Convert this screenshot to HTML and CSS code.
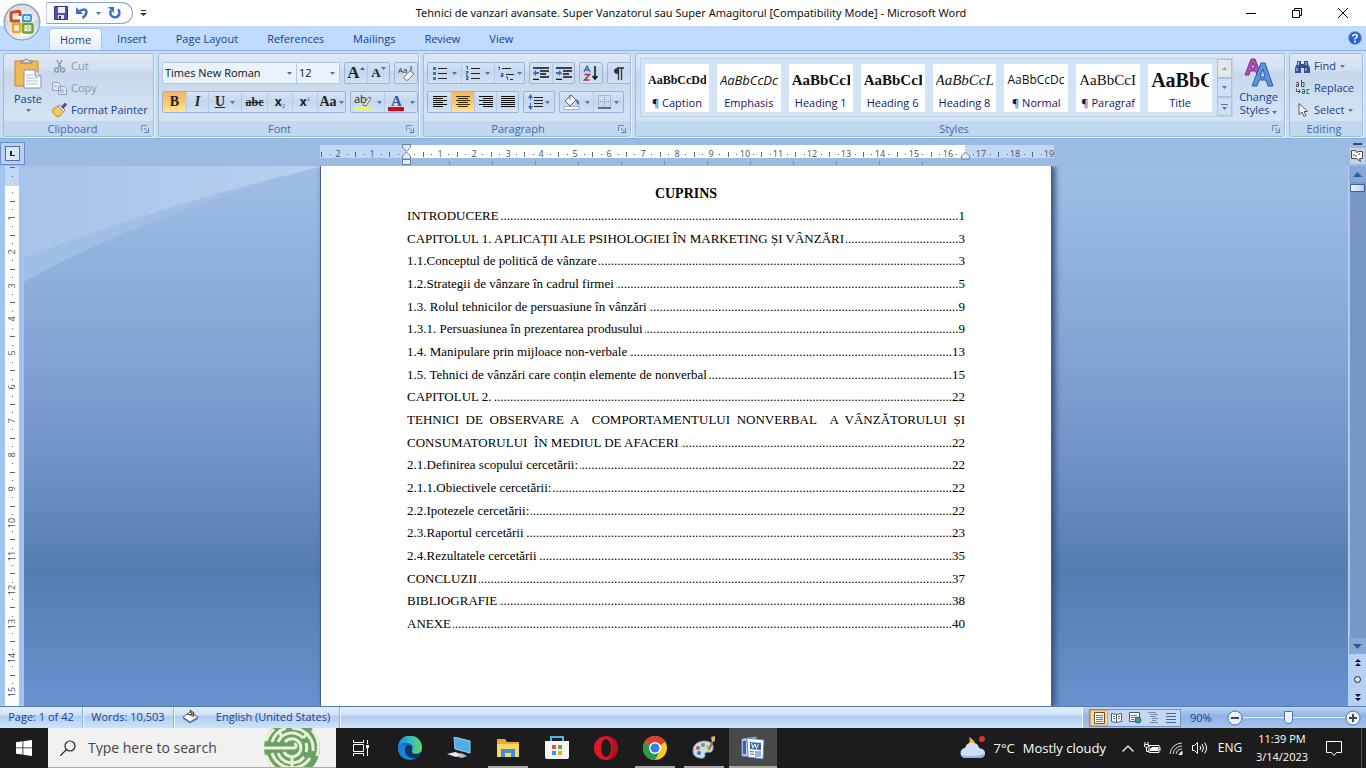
FILE: index.html
```html
<!DOCTYPE html>
<html lang="en">
<head>
<meta charset="utf-8">
<title>Tehnici de vanzari avansate - Microsoft Word</title>
<link rel="stylesheet" href="styles.css">
</head>
<body>
<svg class="defs" aria-hidden="true">
  <symbol id="arrow" viewBox="0 0 5 3"><path d="M0 0h5L2.500 3z" fill="#5673a3"/></symbol>
  <symbol id="launcher" viewBox="0 0 8 8"><path d="M.5 6V.5H6" fill="none" stroke="#6f8fba"/><path d="M3 3l3 3M7.500 3.500v4h-4" fill="none" stroke="#5878a8"/></symbol>
</svg>

<header class="titlebar">
  <button class="orb" aria-label="Office Button">
    <svg viewBox="0 0 38 38" width="38" height="38">
      <defs><radialGradient id="orbg" cx=".5" cy=".75" r=".75"><stop offset="0" stop-color="#fff"/><stop offset=".6" stop-color="#d5dbe5"/><stop offset="1" stop-color="#9aa6ba"/></radialGradient></defs>
      <circle cx="19" cy="19" r="18" fill="url(#orbg)" stroke="#8090ac"/>
      <path d="M3 17a16 15 0 0 1 32 0q-16 5-32 0z" fill="#fff" opacity=".55"/>
      <g fill="none">
        <path d="M17 18H9.500q-1.500 0-1.500-1.500V11q0-1.500 1.500-1.700l6-1q1.500 0 1.500 1.500V13" stroke="#d4491c" stroke-width="3"/>
        <path d="M20 18v-5q0-1 1-1h6q1 0 1 1v4q0 1-1 1z" stroke="#3c8fd0" stroke-width="2"/>
        <path d="M24 12v6M20 15h8" stroke="#8cc4ee"/>
        <path d="M17 21h-6q-1 0-1 1v6q0 1 1 1h5q1 0 1-1z" stroke="#f2a51e" stroke-width="2.500"/>
        <path d="M20 21h8q1.500 0 1.500 1.500V28q0 1.500-1.500 1.500h-6.500q-1.500 0-1.500-1.500z" stroke="#66a82e" stroke-width="2.500"/>
        <path d="M25 21v8M20 25h9" stroke="#a5cf64"/>
      </g>
    </svg>
  </button>
  <nav class="quick" aria-label="Quick Access Toolbar">
    <button aria-label="Save"><svg width="14" height="14" viewBox="0 0 14 14"><path d="M.5.5h13v13H.5z" fill="#5552a8" stroke="#37347f"/><path d="M4 1h7v6H4z" fill="#edf1fc"/><path d="M4 9h6v4H4z" fill="#dfe2f4"/><path d="M5 10h2v3H5z" fill="#37347f"/></svg></button>
    <button aria-label="Undo"><svg width="14" height="14" viewBox="0 0 14 14"><path d="M3 6q8-5 8.500 0 0 3-4 6" fill="none" stroke="#426fbd" stroke-width="2.500"/><path d="M1 1v7h7z" fill="#426fbd"/></svg></button>
    <button class="narrow" aria-label="Undo list"><svg width="5" height="3"><use href="#arrow"/></svg></button>
    <button aria-label="Redo"><svg width="14" height="14" viewBox="0 0 14 14"><path d="M4 4.500a4.500 4.500 0 1 0 7-1" fill="none" stroke="#3a6fc4" stroke-width="2.500"/><path d="M1 1h6v6z" fill="#3a6fc4"/></svg></button>
  </nav>
  <button class="customize" aria-label="Customize Quick Access Toolbar"><svg width="7" height="7" viewBox="0 0 7 7"><path d="M1 .5h5" stroke="#333"/><path d="M0 3h7L3.500 6z" fill="#333"/></svg></button>
  <h1 class="caption">Tehnici de vanzari avansate. Super Vanzatorul sau Super Amagitorul [Compatibility Mode] - Microsoft Word</h1>
  <div class="winbtns">
    <button aria-label="Minimize"><svg width="10" height="10"><path d="M0 5.500h10" stroke="#000"/></svg></button>
    <button aria-label="Restore"><svg width="10" height="10" fill="none" stroke="#000"><path d="M.5 2.500h7v7h-7zM2.500 2.500v-2h7v7h-2"/></svg></button>
    <button aria-label="Close"><svg width="10" height="10" stroke="#000"><path d="M0 0l10 10M10 0L0 10"/></svg></button>
  </div>
</header>

<nav class="tabs" aria-label="Ribbon tabs">
  <button class="tab active">Home</button><button class="tab">Insert</button><button class="tab">Page Layout</button><button class="tab">References</button><button class="tab">Mailings</button><button class="tab">Review</button><button class="tab">View</button>
  <button class="help" aria-label="Help"><svg width="14" height="14" viewBox="0 0 14 14"><circle cx="7" cy="7" r="6.500" fill="#2b62c9" stroke="#7fa4dd"/><path d="M4.800 5.500q0-2 2.200-2t2.200 1.800q0 1-1.200 1.600T7 8.500" fill="none" stroke="#fff" stroke-width="1.600"/><circle cx="7" cy="10.500" r="1" fill="#fff"/></svg></button>
</nav>

<section class="ribbon">
  <section class="group g-clip">
    <div class="body">
      <button class="big"><svg width="28" height="31" viewBox="0 0 28 31"><path d="M1 3h23v25H1z" fill="#efb955" stroke="#c68a2c"/><path d="M7 5V3h3q2-4 5 0h3v2z" fill="#e6e6e6" stroke="#777"/><path d="M10 12h11l6 6v12H10z" fill="#fff" stroke="#7c95bd"/><path d="M21 12v6h6" fill="#d3dff2" stroke="#7c95bd"/><path d="M12 17h7M12 20h12M12 23h12M12 26h12" stroke="#a9bbd8"/></svg><span>Paste</span><svg width="5" height="3"><use href="#arrow"/></svg></button>
      <div class="stack">
        <button class="cmd" disabled><svg width="15" height="14" viewBox="0 0 15 14" fill="none" stroke="#8f99a8" stroke-width="1.500"><path d="M5 1l4 8M10 1L6 9"/><circle cx="4.500" cy="11" r="2"/><circle cx="10.500" cy="11" r="2"/></svg>Cut</button>
        <button class="cmd" disabled><svg width="15" height="14" viewBox="0 0 15 14" fill="#dfe6f0" stroke="#98a4b6"><path d="M.5 1.500h6l2 2v6h-8zM6.500 5.500h6l2 2v6h-8z"/><path d="M8 9h4M8 11h4M2 5h3"/></svg>Copy</button>
        <button class="cmd"><svg width="15" height="14" viewBox="0 0 15 14"><path d="M0 7l6-4 6 5-5 6q-5-1-7-7z" fill="#f0cb59" stroke="#b48b26"/><path d="M6 3l2-1 5 5-1.500 1.500z" fill="#fff" stroke="#888"/><path d="M10 5l4-4.500" stroke="#4a4f87" stroke-width="3"/></svg>Format Painter</button>
      </div>
    </div>
    <footer><h2>Clipboard</h2><button aria-label="Clipboard options"><svg width="8" height="8"><use href="#launcher"/></svg></button></footer>
  </section>

  <section class="group g-font">
    <div class="body rows">
      <div class="row">
        <div class="combos"><select class="face" aria-label="Font"><option>Times New Roman</option></select><select class="size" aria-label="Font size"><option>12</option></select></div>
        <div class="set"><button class="serif f16" aria-label="Grow Font">A<svg width="5" height="3" viewBox="0 0 5 3"><path d="M0 3h5L2.500 0z" fill="#3a66b5"/></svg></button><button class="serif f13" aria-label="Shrink Font">A<svg width="5" height="3"><use href="#arrow"/></svg></button></div>
        <div class="set"><button aria-label="Clear Formatting"><svg width="17" height="17" viewBox="0 0 17 17"><text x="0" y="8" class="tiny">Aa</text><path d="M13 1v5" stroke="#444"/><path d="M6 12l6-6 4 3-6 6q-4 1-4-3z" fill="#fff" stroke="#777"/></svg></button></div>
      </div>
      <div class="row">
        <div class="set"><button class="on w23 serif f14"><b>B</b></button><button class="serif f14"><i>I</i></button><button class="wide serif f14"><u>U</u><svg width="5" height="3"><use href="#arrow"/></svg></button><button class="serif f12 w26"><s>abc</s></button><button class="f12 w25" aria-label="Subscript"><b>x</b><sub>2</sub></button><button class="f12 w25" aria-label="Superscript"><b>x</b><sup>2</sup></button><button class="serif f14 w28" aria-label="Change Case">Aa<svg width="5" height="3"><use href="#arrow"/></svg></button></div>
        <div class="set"><button class="wide" aria-label="Highlight"><svg width="18" height="17" viewBox="0 0 18 17"><path d="M1 13h16v3H1z" fill="#ff0"/><text x="0" y="9" class="ab">ab</text><path d="M9 11l6-8 2 1-5 8z" fill="#f7efd0" stroke="#666"/></svg><svg width="5" height="3"><use href="#arrow"/></svg></button><button class="wide" aria-label="Font Color"><svg width="17" height="17" viewBox="0 0 17 17"><text x="3" y="12" class="fc">A</text><path d="M0 13h16v4H0z" fill="#e3000f"/></svg><svg width="5" height="3"><use href="#arrow"/></svg></button></div>
      </div>
    </div>
    <footer><h2>Font</h2><button aria-label="Font options"><svg width="8" height="8"><use href="#launcher"/></svg></button></footer>
  </section>

  <section class="group g-para">
    <div class="body rows">
      <div class="row">
        <div class="set"><button class="wide" aria-label="Bullets"><svg width="14" height="14" viewBox="0 0 14 14"><path d="M0 1h3v3H0zM0 6h3v3H0zM0 11h3v3H0z" fill="#4a72b5"/><path d="M5 2.500h9M5 7.500h9M5 12.500h9" stroke="#222"/></svg><svg width="5" height="3"><use href="#arrow"/></svg></button><button class="wide" aria-label="Numbering"><svg width="14" height="14" viewBox="0 0 14 14"><path d="M0 .5h1.500v3M0 5.500h2v1.500H0V9h2M0 10.500h2v3H0M0 12h2" fill="none" stroke="#35599b"/><path d="M5 2.500h9M5 7.500h9M5 12.500h9" stroke="#222"/></svg><svg width="5" height="3"><use href="#arrow"/></svg></button><button class="w30" aria-label="Multilevel List"><svg width="17" height="15" viewBox="0 0 17 15"><path d="M0 1h1.500v3M3 7.500h2v3H3V9h2M8 11h1.500v3" fill="none" stroke="#35599b"/><path d="M4 2.500h9M8 8.500h8M12 13.500h3" stroke="#222"/></svg><svg width="5" height="3"><use href="#arrow"/></svg></button></div>
        <div class="set"><button aria-label="Decrease Indent"><svg width="16" height="13" viewBox="0 0 16 13"><path d="M0 1h16M7 4h9M7 7h6M7 10h9M0 12.500h6" stroke="#111" stroke-width="1.500"/><path d="M0 6l3-3v2h3v2H3v2z" fill="#4166c4"/></svg></button><button aria-label="Increase Indent"><svg width="16" height="13" viewBox="0 0 16 13"><path d="M0 1h16M7 4h9M7 7h6M7 10h9M0 12.500h6" stroke="#111" stroke-width="1.500"/><path d="M6 6L3 3v2H0v2h3v2z" fill="#4166c4"/></svg></button></div>
        <div class="set"><button aria-label="Sort"><svg width="16" height="16" viewBox="0 0 16 16"><path d="M1 7l3-6 3 6M2 5h4" fill="none" stroke="#3a66b5" stroke-width="1.300"/><path d="M1.500 9.500h5l-5 5.500h5" fill="none" stroke="#b0303c" stroke-width="1.500"/><path d="M12 1v13M9.500 11l2.500 3 2.500-3" fill="none" stroke="#111" stroke-width="1.500"/></svg></button></div>
        <div class="set"><button aria-label="Show marks"><svg width="12" height="13" viewBox="0 0 12 13"><path d="M5 7Q1 7 1 4t4-3z" fill="#333"/><path d="M4 1h7M5.500 1v12M8.500 1v12" stroke="#333" stroke-width="1.300"/></svg></button></div>
      </div>
      <div class="row">
        <div class="set"><button class="w23" aria-label="Align Left"><svg width="14" height="12" stroke="#111"><path d="M0 .5h14M0 2.500h10M0 4.500h14M0 6.500h10M0 8.500h14M0 10.500h10"/></svg></button><button class="on w23" aria-label="Center"><svg width="14" height="12" stroke="#3a2800"><path d="M0 .5h14M2 2.500h10M0 4.500h14M2 6.500h10M0 8.500h14M2 10.500h10"/></svg></button><button aria-label="Align Right"><svg width="14" height="12" stroke="#111"><path d="M0 .5h14M4 2.500h10M0 4.500h14M4 6.500h10M0 8.500h14M4 10.500h10"/></svg></button><button aria-label="Justify"><svg width="14" height="12" stroke="#111"><path d="M0 .5h14M0 2.500h14M0 4.500h14M0 6.500h14M0 8.500h14M0 10.500h14"/></svg></button></div>
        <div class="set"><button class="w30" aria-label="Line Spacing"><svg width="15" height="16" viewBox="0 0 15 16"><path d="M2.500 2v4M2.500 9v5" stroke="#3a66b5"/><path d="M0 4l2.500-4L5 4zM0 12l2.500 4L5 12z" fill="#3a66b5"/><path d="M6 3.500h9M6 6.500h9M6 9.500h9M6 12.500h9" stroke="#222"/></svg><svg width="5" height="3"><use href="#arrow"/></svg></button></div>
        <div class="set"><button class="wide" aria-label="Shading"><svg width="17" height="16" viewBox="0 0 17 16"><path d="M2 7l6-6 5 5-6 6z" fill="#f6f8fc" stroke="#566782"/><path d="M7 1v5" stroke="#566782"/><path d="M12 5q5 1 4 6-2-1-3-4z" fill="#496ca8"/><path d="M1 12.500h15v3H1z" fill="#fff" stroke="#a0aec4"/></svg><svg width="5" height="3"><use href="#arrow"/></svg></button><button class="w30" aria-label="Borders"><svg width="14" height="14" viewBox="0 0 14 14"><path d="M.5.5h12v12H.5zM6.500 0v13M0 6.500h13" fill="none" stroke="#8194b3" stroke-dasharray="1 1"/><path d="M0 13h13" stroke="#111"/></svg><svg width="5" height="3"><use href="#arrow"/></svg></button></div>
      </div>
    </div>
    <footer><h2>Paragraph</h2><button aria-label="Paragraph options"><svg width="8" height="8"><use href="#launcher"/></svg></button></footer>
  </section>

  <section class="group g-styles">
    <div class="body">
      <div class="gallery">
        <button class="style"><span class="sample s1">AaBbCcDd</span><span>¶ Caption</span></button>
        <button class="style"><span class="sample s2">AaBbCcDc</span><span>Emphasis</span></button>
        <button class="style"><span class="sample s3">AaBbCcI</span><span>Heading 1</span></button>
        <button class="style"><span class="sample s3">AaBbCcI</span><span>Heading 6</span></button>
        <button class="style"><span class="sample s4">AaBbCcL</span><span>Heading 8</span></button>
        <button class="style"><span class="sample s5">AaBbCcDc</span><span>¶ Normal</span></button>
        <button class="style"><span class="sample s6">AaBbCcI</span><span>¶ Paragraf</span></button>
        <button class="style"><span class="sample s7">AaBbC</span><span>Title</span></button>
        <div class="scrollers">
          <button class="off" aria-label="Previous styles"><svg width="5" height="3" viewBox="0 0 5 3"><path d="M0 3h5L2.500 0z" fill="#9a9fa8"/></svg></button>
          <button aria-label="Next styles"><svg width="5" height="3"><use href="#arrow"/></svg></button>
          <button aria-label="More styles"><svg width="7" height="6" viewBox="0 0 7 6"><path d="M0 .5h7" stroke="#5673a3"/><path d="M1 3h5L3.500 6z" fill="#5673a3"/></svg></button>
        </div>
      </div>
      <button class="big change"><svg width="30" height="29" viewBox="0 0 30 29"><path d="M1 17L7 1h4l6 16h-4l-1-4H6l-1 4zM7 10h4L9 5z" fill="#b04db4" stroke="#7d3490"/><path d="M8 28L17 5h4l8 23h-5l-2-6h-7l-2 6zM16 19h5l-2-8z" fill="#5c93dc" stroke="#2d5ea8"/></svg><span>Change<br>Styles <svg width="5" height="3"><use href="#arrow"/></svg></span></button>
    </div>
    <footer><h2>Styles</h2><button aria-label="Styles options"><svg width="8" height="8"><use href="#launcher"/></svg></button></footer>
  </section>

  <section class="group g-edit">
    <div class="body">
      <div class="stack">
        <button class="cmd"><svg width="15" height="13" viewBox="0 0 15 13"><path d="M2 1h4v3h3V1h4v3l2 4v5H9V8H6v5H0V8l2-4z" fill="#33518d"/><path d="M2 8v3M11 8v3M3.500 2v3M11 2v3" stroke="#d6e2f5"/></svg>Find<svg width="5" height="3"><use href="#arrow"/></svg></button>
        <button class="cmd"><svg width="15" height="16" viewBox="0 0 15 16"><g fill="none" stroke="#555"><path d="M1 2.500h2.500v4H1.500v-2h2M6.500 0v6.500h2.500v-4H6.500"/><path d="M7 9.500h2.500v4H7.500v-2h2M14.500 9.500H12v4h2.500" stroke="#257a3a"/><path d="M1.500 8.500v3H5M3.500 9.500l2 2-2 2"/></g></svg>Replace</button>
        <button class="cmd"><svg width="15" height="14" viewBox="0 0 15 14"><path d="M4 .5v11l3-2.500 2 4.500 2-1-2-4h3.500z" fill="#fff" stroke="#556"/></svg>Select<svg width="5" height="3"><use href="#arrow"/></svg></button>
      </div>
    </div>
    <footer><h2>Editing</h2></footer>
  </section>
</section>

<main class="workspace">
  <div class="corner"><button aria-label="Left Tab"><svg width="6" height="6"><path d="M1 0v5h5" fill="none" stroke="#223" stroke-width="2"/></svg></button></div>
  <div class="hwrap"><svg class="hruler" id="hruler" role="img" aria-label="Horizontal ruler"></svg></div>
  <div class="rtop"><button aria-label="View Ruler"><svg width="12" height="12" viewBox="0 0 12 12" fill="#fff" stroke="#445"><path d="M.5.5h4l1 2 2-1h4v7h-3l1 3-4-3h-5z"/><path d="M3 4v2M5 5v2M8 3v2" /></svg></button></div>
  <div class="vwrap"><svg class="vruler" id="vruler" role="img" aria-label="Vertical ruler"></svg></div>
  <div class="canvas">
    <svg class="swoosh" width="296" height="118" viewBox="0 0 296 118"><defs><linearGradient id="sw" x1="0" x2="1"><stop offset="0" stop-color="#a5c4e8"/><stop offset="1" stop-color="#b7d0f0"/></linearGradient></defs><path d="M0 116Q120 48 296 2L296 0H0z" fill="#a0bfe6"/><path d="M0 92Q140 38 296 1V0H0z" fill="url(#sw)"/></svg>
    <article class="page">
      <h2 class="toc-title">CUPRINS</h2>
      <div class="toc">
        <a href="#"><span>INTRODUCERE</span><i></i><b>1</b></a>
        <a href="#"><span>CAPITOLUL 1. APLICAȚII ALE PSIHOLOGIEI ÎN MARKETING ȘI VÂNZĂRI</span><i></i><b>3</b></a>
        <a href="#"><span>1.1.Conceptul de politică de vânzare</span><i></i><b>3</b></a>
        <a href="#"><span>1.2.Strategii de vânzare în cadrul firmei</span><i></i><b>5</b></a>
        <a href="#"><span>1.3. Rolul tehnicilor de persuasiune în vânzări</span><i></i><b>9</b></a>
        <a href="#"><span>1.3.1. Persuasiunea în prezentarea produsului</span><i></i><b>9</b></a>
        <a href="#"><span>1.4. Manipulare prin mijloace non-verbale</span><i></i><b>13</b></a>
        <a href="#"><span>1.5. Tehnici de vânzări care conțin elemente de nonverbal</span><i></i><b>15</b></a>
        <a href="#"><span>CAPITOLUL 2.</span><i></i><b>22</b></a>
        <a href="#" class="justify">TEHNICI DE OBSERVARE A &nbsp;COMPORTAMENTULUI NONVERBAL &nbsp;A VÂNZĂTORULUI ȘI</a>
        <a href="#"><span>CONSUMATORULUI &nbsp;ÎN MEDIUL DE AFACERI</span><i></i><b>22</b></a>
        <a href="#"><span>2.1.Definirea scopului cercetării:</span><i></i><b>22</b></a>
        <a href="#"><span>2.1.1.Obiectivele cercetării:</span><i></i><b>22</b></a>
        <a href="#"><span>2.2.Ipotezele cercetării:</span><i></i><b>22</b></a>
        <a href="#"><span>2.3.Raportul cercetării</span><i></i><b>23</b></a>
        <a href="#"><span>2.4.Rezultatele cercetării</span><i></i><b>35</b></a>
        <a href="#"><span>CONCLUZII</span><i></i><b>37</b></a>
        <a href="#"><span>BIBLIOGRAFIE</span><i></i><b>38</b></a>
        <a href="#"><span>ANEXE</span><i></i><b>40</b></a>
      </div>
    </article>
  </div>
  <div class="vscroll">
    <button aria-label="Scroll up"><svg width="9" height="5" viewBox="0 0 9 5"><path d="M0 5h9L4.500 0z" fill="#34558f"/></svg></button>
    <div class="track"><div class="thumb"></div></div>
    <button aria-label="Scroll down"><svg width="9" height="5" viewBox="0 0 9 5"><path d="M0 0h9L4.500 5z" fill="#34558f"/></svg></button>
    <div class="browse">
      <button aria-label="Previous Page"><svg width="6" height="7" viewBox="0 0 6 7"><path d="M0 3h6L3 0zM0 7h6L3 4z" fill="#112"/></svg></button>
      <button aria-label="Select Browse Object"><svg width="7" height="7"><circle cx="3.500" cy="3.500" r="3" fill="#dce4ee" stroke="#223"/></svg></button>
      <button aria-label="Next Page"><svg width="6" height="7" viewBox="0 0 6 7"><path d="M0 0h6L3 3zM0 4h6L3 7z" fill="#112"/></svg></button>
    </div>
  </div>
</main>

<footer class="status">
  <button class="st-page">Page: 1 of 42</button>
  <button class="st-words">Words: 10,503</button>
  <button class="st-proof" aria-label="Proofing"><svg width="17" height="15" viewBox="0 0 17 15"><path d="M1 8l7-5 8 5-8 5z" fill="#fff" stroke="#4b6390"/><path d="M1 8v2l7 4.500 8-4.500V8l-8 5z" fill="#5b7fbd"/><path d="M5 5l5 1-2-5 4 3-1 4" fill="#c79a6b" stroke="#5a3a25"/></svg></button>
  <button class="st-lang">English (United States)</button>
  <div class="st-right">
    <div class="views">
      <button class="on" aria-label="Print Layout"><svg width="11" height="12"><path d="M.5.500h10v11H.5z" fill="#fff" stroke="#6b5130"/><path d="M2 3.500h7M2 5.500h7M2 7.500h7M2 9.500h7" stroke="#777"/></svg></button>
      <button aria-label="Full Screen Reading"><svg width="12" height="11"><path d="M.5 1.500l5 1 5-1v8l-5 1-5-1zM5.500 2v8" fill="#fff" stroke="#48597a"/><path d="M2 4.500h2M2 6.500h2M7 4.500h2M7 6.500h2" stroke="#667"/></svg></button>
      <button aria-label="Web Layout"><svg width="13" height="12"><path d="M.5.500h10v9H.5z" fill="#fff" stroke="#48597a"/><path d="M2 3.500h6M2 5.500h5M2 7.500h3" stroke="#777"/><circle cx="9" cy="8" r="3" fill="#3d9a86" stroke="#2b5d8e"/></svg></button>
      <button aria-label="Outline"><svg width="10" height="11" stroke="#7d8ba5"><path d="M0 .5h8M2 2.500h8M2 4.500h6M4 6.500h6M4 8.500h4M2 10.500h8"/></svg></button>
      <button aria-label="Draft"><svg width="10" height="10" stroke="#56657f"><path d="M0 .5h10M0 3.500h10M0 6.500h10M0 9.500h10"/></svg></button>
    </div>
    <button class="pct">90%</button>
    <button class="zoom-btn" aria-label="Zoom Out"><svg width="16" height="16"><circle cx="8" cy="8" r="7" fill="#eaf1fb" stroke="#5a7296"/><path d="M4 8h8" stroke="#445" stroke-width="2"/></svg></button>
    <input class="zoom" type="range" min="0" max="100" value="44" aria-label="Zoom">
    <button class="zoom-btn" aria-label="Zoom In"><svg width="16" height="16"><circle cx="8" cy="8" r="7" fill="#eaf1fb" stroke="#5a7296"/><path d="M4 8h8M8 4v8" stroke="#445" stroke-width="2"/></svg></button>
  </div>
</footer>

<footer class="taskbar">
  <button class="start" aria-label="Start"><svg width="16" height="16" viewBox="0 0 16 16" fill="#fff"><path d="M0 2.200L6.500 1.300v6.200H0zM7.300 1.200L16 0v7.500H7.300zM0 8.300h6.500v6.300L0 13.700zM7.300 8.300H16V16l-8.700-1.200z"/></svg></button>
  <label class="search">
    <svg width="16" height="16" viewBox="0 0 16 16" fill="none" stroke="#222" stroke-width="1.200"><circle cx="10" cy="6" r="5"/><path d="M6.500 9.500L0 16"/></svg>
    <input type="text" placeholder="Type here to search" aria-label="Search">
    <svg class="maze" width="56" height="40" viewBox="0 0 56 40"><circle cx="28" cy="20" r="28" fill="#6b9f6a"/><g fill="none" stroke="#e9f3d3" stroke-width="3"><path d="M0 20h30a2 2 0 0 0 0-4"/><path d="M20 24a9 9 0 1 0 1-10"/><path d="M14 25a15 15 0 0 0 26 4M14 14a15 15 0 0 1 25-4M42 15a15 15 0 0 1 0 9"/><path d="M8 25a21 21 0 0 0 38 5M8 14a21 21 0 0 1 14-14M28 0a21 21 0 0 1 21 23"/><path d="M2 27a27 27 0 0 0 10 14M2 13a27 27 0 0 1 8-12M48 2a27 27 0 0 1 5 26M28 29v11M39 10l5-5M18 9l-3-6"/></g></svg>
  </label>
  <nav class="apps" aria-label="Taskbar">
    <button aria-label="Task View"><svg width="16" height="16" viewBox="0 0 16 16" fill="none" stroke="#fff"><path d="M.5 0v2.500h10V0M.5 16v-2.500h10V16M.5 4.500h10v7H.5zM14.500 0v4M14.500 8v8"/><path d="M13 5h3v3h-3z" fill="#fff" stroke="none"/></svg></button>
    <button aria-label="Edge"><svg width="24" height="24" viewBox="0 0 24 24"><defs><linearGradient id="eg" x2="1"><stop stop-color="#238fe0"/><stop offset=".5" stop-color="#35b9c5"/><stop offset="1" stop-color="#62d957"/></linearGradient></defs><circle cx="12" cy="12" r="12" fill="#0e6fcb"/><path d="M0 11A12 12 0 0 1 24 12q0 6-7 6-4 0-3-3 3-7-4-8Q3 6 0 11z" fill="url(#eg)"/><path d="M10 9q5 0 4 5-1 4 4 4 3 0 5-2 0 3-5 6Q6 22 7 14q0-4 3-5z" fill="#15335b"/><path d="M8 10q-4 9 7 13Q1 25 0 12q2-6 8-2z" fill="#1684df"/></svg></button>
    <button aria-label="This PC"><svg width="24" height="22" viewBox="0 0 24 22"><path d="M7 0l16 4v12L8 12z" fill="#51aceb" stroke="#a9cfe9"/><path d="M0 17l8-2 9 3-8 2z" fill="#e2e8ec"/><path d="M14 16l6 3-5 2-4-1z" fill="#b6c2cb"/></svg></button>
    <button class="run" aria-label="File Explorer"><svg width="22" height="20" viewBox="0 0 22 20"><path d="M0 1h8l2 3h12v15H0z" fill="#e9ad2f"/><path d="M0 6h22v13H0z" fill="#fbd768"/><path d="M4 19v-8h14v8h-4v-4H8v4z" fill="#3f91d1"/></svg></button>
    <button aria-label="Store"><svg width="24" height="24" viewBox="0 0 24 24"><path d="M6 5V1h12v4" fill="none" stroke="#4bb5ea" stroke-width="2"/><path d="M0 5h24v16q0 2-2 2H2q-2 0-2-2z" fill="#f4f5f7"/><path d="M7 9h4v4H7z" fill="#df5535"/><path d="M13 9h4v4h-4z" fill="#73a92a"/><path d="M7 15h4v4H7z" fill="#3a9bd4"/><path d="M13 15h4v4h-4z" fill="#e9aa21"/></svg></button>
    <button aria-label="Opera"><svg width="24" height="24" viewBox="0 0 24 24"><circle cx="12" cy="12" r="12" fill="#e3152b"/><path d="M12 0a12 12 0 0 1 0 24q6-2 6-12T12 0z" fill="#b80e20"/><ellipse cx="12" cy="12" rx="5" ry="9" fill="#1c1c1c"/></svg></button>
    <button class="run" aria-label="Chrome"><svg width="24" height="24" viewBox="0 0 24 24"><circle cx="12" cy="12" r="12" fill="#fbc928"/><path d="M12 12L1.600 6A12 12 0 0 1 22.400 6z" fill="#e23e30"/><path d="M12 12L1.600 6A12 12 0 0 0 12 24l5-9z" fill="#279b4b"/><circle cx="12" cy="12" r="6" fill="#fff"/><circle cx="12" cy="12" r="4.600" fill="#3b7fea"/></svg></button>
    <button class="run" aria-label="Paint"><svg width="24" height="24" viewBox="0 0 24 24"><path d="M1 15Q1 6 12 5q10 0 9 8-1 4-5 3-4 0-3 3 0 4-5 3-7-1-7-7z" fill="#c8dced" stroke="#8ea6b8"/><circle cx="6" cy="12" r="2" fill="#d8503e"/><circle cx="11" cy="9" r="2" fill="#69a845"/><circle cx="16" cy="11" r="2" fill="#e6b530"/><circle cx="7" cy="17" r="2" fill="#3b71c1"/><path d="M17 14l4-10" stroke="#a96c35" stroke-width="2"/><path d="M20 6l-1-5 4-1v5z" fill="#e2b470"/></svg></button>
    <button class="run current" aria-label="Word"><svg width="24" height="24" viewBox="0 0 24 24"><path d="M1 3l14-2v20L1 20z" fill="#c9d9f0" stroke="#7899d0"/><path d="M6 2l17 2-1 19-15-2z" fill="#fff" stroke="#5c83c4"/><path d="M2 5l3-.500v14L2 18z" fill="#3265b5"/><path d="M9 6l11 1v7l-11-1z" fill="#3265b5"/><path d="M10.500 7l1.500 5 2-4 1.500 4.500 2-4.500" fill="none" stroke="#fff"/><path d="M9 15.500l4 .500M9 18l4 .500M15 15v6M17 15v6M19 15v6" stroke="#3a62a8"/></svg></button>
  </nav>
  <div class="tray">
    <button class="weather"><svg width="26" height="24" viewBox="0 0 26 24"><path d="M9 1q3 6-5 12 5 4 11-1Q17 5 9 1z" fill="#f5b33d"/><path d="M6 22a5 5 0 0 1-1-10q2-6 8-5 5 0 6 5 6 1 6 5 0 5-6 5z" fill="#cddffa"/><path d="M2 19q11 3 23-1-1 4-6 4H6q-3 0-4-3z" fill="#8db3ee"/><circle cx="22" cy="3" r="3" fill="#d5382f"/></svg><span>7°C</span><span>Mostly cloudy</span></button>
    <button aria-label="Hidden icons"><svg width="12" height="7" viewBox="0 0 12 7" fill="none" stroke="#fff" stroke-width="1.200"><path d="M.5 6.500L6 1l5.500 5.500"/></svg></button>
    <button aria-label="Battery"><svg width="17" height="12" viewBox="0 0 17 12" fill="none" stroke="#fff"><path d="M5 3.500h10v7H5zM16 5v4"/><path d="M8 5h6v4H6V7z" fill="#fff" stroke="none"/><path d="M1 0v2M4 0v2M.5 2.500h4v2l-2 1-2-1zM2.500 5v4.500H5"/></svg></button>
    <button aria-label="Network"><svg width="14" height="14" viewBox="0 0 14 14" fill="none" stroke="#ddd"><path d="M1 13A12 12 0 0 1 13 2M4 13a9 9 0 0 1 9-8M7 13a6 6 0 0 1 6-5"/><path d="M10 13.500l3-3v3z" fill="#fff" stroke="#fff"/></svg></button>
    <button aria-label="Volume"><svg width="16" height="14" viewBox="0 0 16 14" fill="none" stroke="#fff"><path d="M.5 4.500h2l3-3v11l-3-3h-2zM8 5q1.500 2 0 4M10 3q3 4 0 8M12.500 1.500q4 5.500 0 11"/></svg></button>
    <button class="lang">ENG</button>
    <button class="clock"><time>11:39 PM</time><time>3/14/2023</time></button>
    <button class="notice" aria-label="Notifications"><svg width="16" height="17" viewBox="0 0 16 17" fill="none" stroke="#fff"><path d="M.5 1.500h15v11h-5l-2.500 3-2.500-3h-5z"/></svg></button>
  </div>
</footer>
<script src="rulers.js"></script>
</body>
</html>
```
FILE: styles.css
```css
* { box-sizing: border-box; }
body { margin: 0; height: 100vh; overflow: hidden; display: flex; flex-direction: column; font: 11px/16px "Open Sans", "Noto Sans", sans-serif; color: #15428b; background: #bfdbff; }
button { font: inherit; color: inherit; background: none; border: 0; padding: 0; margin: 0; display: flex; align-items: center; justify-content: center; white-space: nowrap; }
h1, h2 { margin: 0; font: inherit; }
svg { flex: none; }
.defs { position: absolute; width: 0; height: 0; }

/* Title bar */
.titlebar { position: relative; z-index: 2; flex: none; height: 26px; display: flex; align-items: center; background: #fff; padding-left: 46px; }
.orb { position: absolute; left: 3px; top: 3px; }
.quick { height: 22px; width: 87px; display: flex; align-items: center; gap: 3px; padding-left: 5px; border: 1px solid #8ea3c4; border-left-color: #c5d0e2; border-radius: 0 11px 11px 0; background: #fbfcff; }
.quick button { width: 18px; }
.quick .narrow { width: 8px; }
.customize { width: 20px; }
.caption { flex: 1; text-align: center; color: #111; font-family: "Noto Sans", sans-serif; white-space: nowrap; overflow: hidden; line-height: 20px; padding-left: 1px; }
.winbtns { display: flex; }
.winbtns button { width: 46px; height: 24px; }

/* Tabs */
.tabs { flex: none; height: 24px; display: flex; align-items: flex-end; gap: 1px; padding: 0 4px 0 49px; }
.tab { height: 22px; padding: 0 14px; }
.tab.active { background: linear-gradient(#fff, #e3edf9); border: 1px solid #a9c6ec; border-bottom: 0; border-radius: 4px 4px 0 0; padding: 0 10px; }
.help { margin-left: auto; height: 24px; }

/* Ribbon */
.ribbon { flex: none; height: 89px; display: flex; gap: 4px; padding: 2px 3px 1px; background: #c9dcf4; border-top: 1px solid #8db2e3; border-bottom: 1px solid #7fb3dd; }
.group { display: flex; flex-direction: column; border: 1px solid #9ebfdb; border-radius: 3px; background: linear-gradient(#dfe9f5 0, #d3e0f1 16px, #c7d8ed 18px, #d9e8f6 100%); box-shadow: 1px 1px 0 #e9f3fd; overflow: hidden; }
.g-clip { width: 151px; }
.g-font { width: 261px; }
.g-para { width: 208px; }
.g-styles { flex: 1; min-width: 0; }
.g-edit { width: 74px; }
.body { flex: 1; display: flex; min-height: 0; }
.rows { flex-direction: column; gap: 7px; padding: 8px 0 0 3px; }
.row { display: flex; gap: 4px; height: 22px; }
.group footer { flex: none; height: 15px; display: flex; align-items: center; background: #c2d8f0; color: #3e6aaa; padding-right: 4px; }
.group h2 { flex: 1; text-align: center; }
.g-font h2, .g-para h2 { padding-right: 6px; }
.big { flex-direction: column; justify-content: flex-start; width: 48px; padding-top: 4px; }
.big span { line-height: 13px; }
.big > span { padding-top: 3px; }
.g-clip .big > span { padding-bottom: 4px; }
.stack { display: flex; flex-direction: column; padding-top: 1px; }
.cmd { height: 22px; gap: 4px; justify-content: flex-start; }
.cmd:disabled { color: #8d96a5; }
.g-edit .stack { padding-left: 5px; }

.combos { display: flex; width: 179px; border: 1px solid #b3c7e1; }
select { appearance: none; border: 0; border-radius: 0; font: inherit; color: #111; padding: 0 2px; background: #eaf2fb url("data:image/svg+xml,%3Csvg xmlns='http://www.w3.org/2000/svg' width='5' height='3'%3E%3Cpath d='M0 0h5L2.5 3z' fill='%235673a3'/%3E%3C/svg%3E") no-repeat right 4px center; }
.face { flex: 1; }
.size { width: 43px; border-left: 1px solid #b3c7e1; }
.set { display: flex; border: 1px solid #9ab5d8; border-radius: 2px; background: linear-gradient(#d6e4f5, #c3d7ef 50%, #d2e3f6); }
.set button { width: 22px; gap: 2px; color: #222; }
.set button + button { border-left: 1px solid #b5cae5; }
.set .w23 { width: 23px; }
.set .w25 { width: 25px; gap: 0; }
.set .w26 { width: 26px; }
.set .w28 { width: 28px; }
.set .w30 { width: 30px; }
.set .wide { width: 33px; gap: 5px; }
.set .on { background: linear-gradient(#f5b567, #fbc66c 50%, #ffe597); }
.serif { font-family: "Liberation Serif", serif; font-weight: bold; }
.set .f16 { font-size: 17px; gap: 0; }
.f16 svg, .f13 svg { margin-bottom: 10px; }
.set .f13 { font-size: 13px; gap: 0; }
.f14 { font-size: 14px; }
.f12 { font-size: 12px; }
.set button sub, .set button sup { font-size: 6px; line-height: 8px; color: #3a66b5; }
.set button sub { align-self: flex-end; padding-bottom: 2px; }
.set button sup { align-self: flex-start; padding-top: 3px; }
.tiny { font: 8px "Open Sans", sans-serif; fill: #333; }
.ab { font: 11px "Open Sans", sans-serif; fill: #222; }
.fc { font: bold 15px "Liberation Serif", serif; fill: #35599b; }

.gallery { flex: 1; min-width: 0; display: flex; gap: 8px; margin: 4px 0 4px 4px; padding: 5px 0 4px 4px; background: #d3e4f7; border: 1px solid #bdd3ed; }
.style { flex: 1; min-width: 0; flex-direction: column; background: #fff; color: #15156b; overflow: hidden; justify-content: space-between; padding: 4px 3px 1px; }
.sample { width: 100%; height: 24px; line-height: 24px; overflow: hidden; text-align: left; color: #111; }
.s1, .s3, .s4, .s6, .s7 { font-family: "Liberation Serif", serif; }
.s1 { font-size: 12px; font-weight: bold; }
.s2 { font-style: italic; font-size: 13px; }
.s3 { font-size: 15px; font-weight: bold; }
.s4 { font-size: 15px; font-style: italic; }
.s5 { font-size: 12px; }
.s6 { font-size: 15px; }
.s7 { font-size: 20px; font-weight: bold; }
.scrollers { flex: none; width: 15px; display: flex; flex-direction: column; margin: -5px 0 -4px -3px; }
.scrollers button { flex: 1; border: 1px solid #a9c2e3; background: #cfe0f5; }
.scrollers .off { background: #e3e6ea; }
.change { flex: none; width: 51px; }

/* Editing area */
.workspace { flex: 1; min-height: 0; display: grid; grid-template: 27px 1fr / 24px 1fr 18px; background: #9cbbe3; }
.corner { padding: 3px 0 1px; }
.corner button { width: 25px; height: 23px; border: 1px solid #6a8fca; background: #b9d0f1; }
.corner svg { border: 1px solid #4a6fae; width: 15px; height: 15px; padding: 4px; background: #dce8fa; }
.hwrap { display: flex; justify-content: center; padding-top: 5px; overflow: hidden; }
.hruler { width: 734px; height: 22px; margin-left: 2px; }
.rtop { display: flex; flex-direction: column; align-items: center; padding-top: 4px; }
.rtop::before { content: ""; width: 9px; height: 2px; background: #2d4b80; margin-bottom: 3px; }
.rtop button { width: 15px; height: 16px; background: #cbd3de; }
.vwrap { padding-left: 5px; overflow: hidden; background: #a3c4ef; }
.vruler { display: block; width: 14px; height: 100%; }
svg text.num { font: 9px "Open Sans", sans-serif; fill: #44505f; text-anchor: middle; }
.canvas { position: relative; overflow: hidden; display: flex; justify-content: center; background: linear-gradient(#9fbee7 0, #8dabd8 25%, #6f93c8 55%, #567db2 75%, #5c85bd 85%, #6893cf 100%); }
.swoosh { position: absolute; left: 0; top: 0; }
.page { position: relative; width: 732px; padding: 17px 86px 0; background: #fff; border: 1px solid #4a5f80; border-width: 0 1px; box-shadow: 3px 0 6px #34507b; color: #000; font: 13px/22px "Liberation Serif", serif; }
.toc-title { text-align: center; font-size: 14px; font-weight: bold; }
.toc { min-height: 430px; display: grid; align-content: space-between; }
.toc a { display: flex; gap: 2px; color: inherit; text-decoration: none; white-space: nowrap; min-width: 0; }
.toc i { flex: 1; width: 0; overflow: hidden; direction: rtl; font-style: normal; }
.toc i::before { content: "................................................................................................................................................................................................"; }
.toc b { font-weight: normal; margin-left: -2px; }
.toc .justify { display: block; text-align: justify; text-align-last: justify; white-space: normal; }

.vscroll { display: flex; flex-direction: column; padding-left: 1px; background: #b6d0f3; }
.vscroll > button { height: 16px; background: #87a7d6; }
.track { flex: 1; background: #7897c5; border-left: 1px solid #a9c4ea; padding-top: 2px; }
.thumb { width: 15px; height: 8px; border: 1px solid #46618f; border-radius: 1px; background: linear-gradient(90deg, #f1f6fd, #b3cbee); }
.browse { height: 52px; display: flex; flex-direction: column; justify-content: space-around; align-items: center; }

/* Status bar */
.status { flex: none; height: 22px; display: flex; border-top: 1px solid #567db1; background: linear-gradient(#e2eefc 0, #cfe1f8 8px, #b2cdef 9px, #cfe2fa 100%); }
.status > button { border-right: 1px solid #8fb2e0; box-shadow: 1px 0 0 #eef5fe; padding-bottom: 2px; }
.st-page { width: 83px; }
.st-words { width: 91px; }
.st-proof { width: 33px; }
.status .st-proof { border: 0; box-shadow: none; }
.st-lang { width: 133px; }
.st-right { margin-left: auto; display: flex; align-items: center; padding: 0 5px 0 6px; border-left: 1px solid #eef5fe; background: linear-gradient(#bdd5f5, #8fb3e5 45%, #a7c6ef); }
.views { display: flex; height: 18px; border: 1px solid #6f93c9; background: #c3d8f4; }
.views button { width: 18px; }
.views .on { background: #fbd89a; border: 1px solid #dca94f; }
.pct { width: 46px; justify-content: flex-start; padding-left: 9px; }
.zoom-btn { width: 16px; }
.zoom { appearance: none; width: 102px; height: 16px; margin: 0; background: linear-gradient(#eaf3ff, #eaf3ff) no-repeat center / 100% 1px; }
.zoom::-webkit-slider-thumb { appearance: none; width: 9px; height: 13px; background: #eaf2fd; border: 1px solid #5a7296; border-radius: 1px 1px 4px 4px; }

/* Taskbar */
.taskbar { flex: none; height: 40px; display: flex; background: #1c1c1c; color: #fff; font-size: 13px; }
.start { width: 48px; }
.search { width: 288px; display: flex; align-items: center; gap: 12px; padding-left: 12px; background: #f1f1f1; border-bottom: 1px solid #aaa; overflow: hidden; }
.search input { flex: 1; min-width: 0; border: 0; background: none; font: inherit; font-size: 14px; padding: 0; outline: 0; }
.search input::placeholder { color: #444; opacity: 1; }
.maze { margin-right: 16px; }
.apps { display: flex; gap: 1px; padding-left: 1px; }
.apps button { width: 48px; }
.apps .run { background: linear-gradient(#a8a8a8, #a8a8a8) no-repeat bottom / 40px 2px; }
.apps .current { background: #494949; border-bottom: 2px solid #a8a8a8; padding-top: 2px; }
.tray { margin-left: auto; display: flex; align-items: center; }
.tray button { height: 40px; width: 24px; }
.tray .weather { width: auto; gap: 8px; margin-right: 10px; }
.tray .lang { width: 36px; font-size: 12px; }
.tray .clock { width: 68px; flex-direction: column; font-size: 11px; line-height: 18px; }
.tray .notice { width: 46px; padding-right: 10px; margin-right: 4px; border-right: 1px solid #555; }
```
FILE: rulers.js
```javascript
const NS = "http://www.w3.org/2000/svg";
const CM = 33.85;

function add(svg, name, attrs, text) {
  const el = document.createElementNS(NS, name);
  for (const key in attrs) el.setAttribute(key, attrs[key]);
  if (text) el.textContent = text;
  svg.appendChild(el);
}

function marks(svg, from, to, zero, vertical) {
  for (let q = from * 4; q <= to * 4; q++) {
    const p = Math.round(zero + q * CM / 4);
    if (q % 4 === 0) {
      if (q === 0) continue;
      const label = String(Math.abs(q / 4));
      if (vertical) add(svg, "text", { class: "num", transform: `translate(10 ${p}) rotate(-90)` }, label);
      else add(svg, "text", { class: "num", x: p, y: 10 }, label);
      continue;
    }
    const len = q % 2 === 0 ? 5 : 1;
    const at = 7 - Math.floor(len / 2);
    add(svg, "rect", vertical
      ? { x: at, y: p, width: len, height: 1, fill: "#56657c" }
      : { x: p, y: at, width: 1, height: len, fill: "#56657c" });
  }
}

const h = document.getElementById("hruler");
add(h, "rect", { x: 0, y: 1, width: 734, height: 13, fill: "#c3d8f4" });
add(h, "rect", { x: 86, y: 1, width: 559, height: 13, fill: "#fff" });
const scale = document.createElementNS(NS, "g");
scale.setAttribute("transform", "translate(0 3)");
h.appendChild(scale);
marks(scale, -2.5, 19, 86, false);
for (let x = 129; x < 645; x += 43) add(h, "rect", { x: x, y: 17, width: 1, height: 4, fill: "#7492be" });
add(h, "path", { d: "M82.500 .5h8v3l-4 4-4-4zM82.500 15v-3l4-4 4 4v3zM82.500 15.500h8v5h-8z", fill: "#e3ebf5", stroke: "#6b7f9f" });
add(h, "path", { d: "M641.500 15v-3l4-4 4 4v3z", fill: "#e3ebf5", stroke: "#6b7f9f" });

const v = document.getElementById("vruler");
const tall = v.getBoundingClientRect().height;
add(v, "rect", { x: 0, y: 0, width: 14, height: 20, fill: "#c3d8f4" });
add(v, "rect", { x: 0, y: 20, width: 14, height: tall, fill: "#fff" });
marks(v, -0.5, Math.floor((tall - 24) / CM * 4) / 4, 18, true);
```
